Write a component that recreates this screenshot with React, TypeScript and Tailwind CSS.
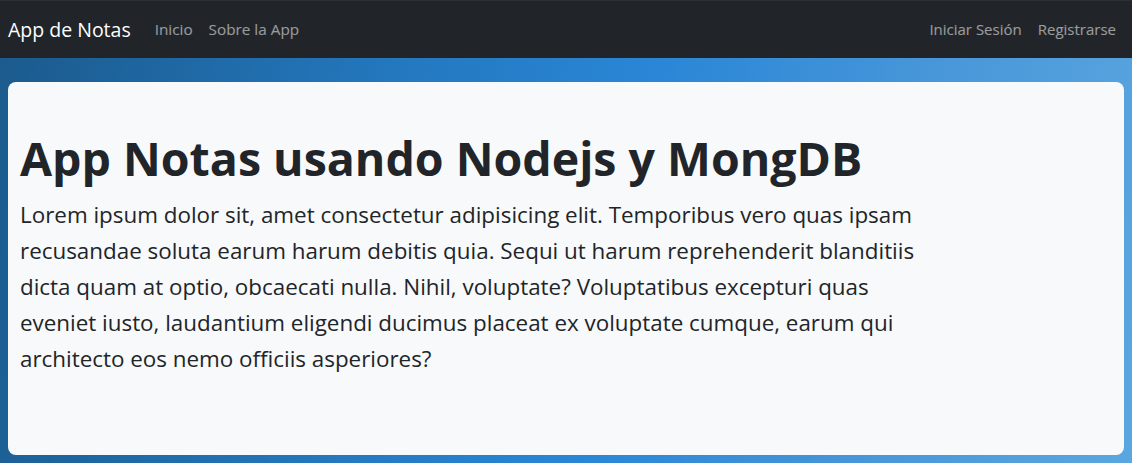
import React from 'react';

const NAV_LEFT = ['Inicio', 'Sobre la App'];
const NAV_RIGHT = ['Iniciar Sesión', 'Registrarse'];

const App: React.FC = () => {
  return (
    <div className="min-h-screen flex flex-col font-['Segoe_UI','Open_Sans',sans-serif] bg-[linear-gradient(100deg,#1b5a8c_0%,#2479c0_35%,#2a86d6_55%,#4a98d9_80%,#5aa6e0_100%)]">
      <nav className="h-[58px] bg-[#212529] border-t border-[#2c3034] flex items-center justify-between pl-2 pr-4">
        <div className="flex items-center">
          <a className="text-white text-[19.5px] mr-4">App de Notas</a>
          {NAV_LEFT.map((item) => (
            <a key={item} className="text-white/55 text-[15.3px] px-2">
              {item}
            </a>
          ))}
        </div>
        <div className="flex items-center">
          {NAV_RIGHT.map((item) => (
            <a key={item} className="text-white/55 text-[15px] pl-4">
              {item}
            </a>
          ))}
        </div>
      </nav>

      <main className="flex-1 px-2 pt-6 pb-2">
        <div className="bg-[#f8f9fa] rounded-lg h-[373px] px-3 pt-[49px]">
          <h1 className="text-[46.5px] font-bold leading-[1.2] text-[#212529] mb-[10px]">App Notas usando Nodejs y MongDB</h1>
          <p className="text-[22.4px] leading-[36px] text-[#212529] max-w-[920px]">
            Lorem ipsum dolor sit, amet consectetur adipisicing elit. Temporibus vero quas ipsam recusandae soluta earum harum debitis quia. Sequi ut harum reprehenderit blanditiis dicta quam at optio, obcaecati nulla. Nihil, voluptate? Voluptatibus excepturi quas eveniet iusto, laudantium eligendi ducimus placeat ex voluptate cumque, earum qui architecto eos nemo officiis asperiores?
          </p>
        </div>
      </main>
    </div>
  );
};

export default App;
